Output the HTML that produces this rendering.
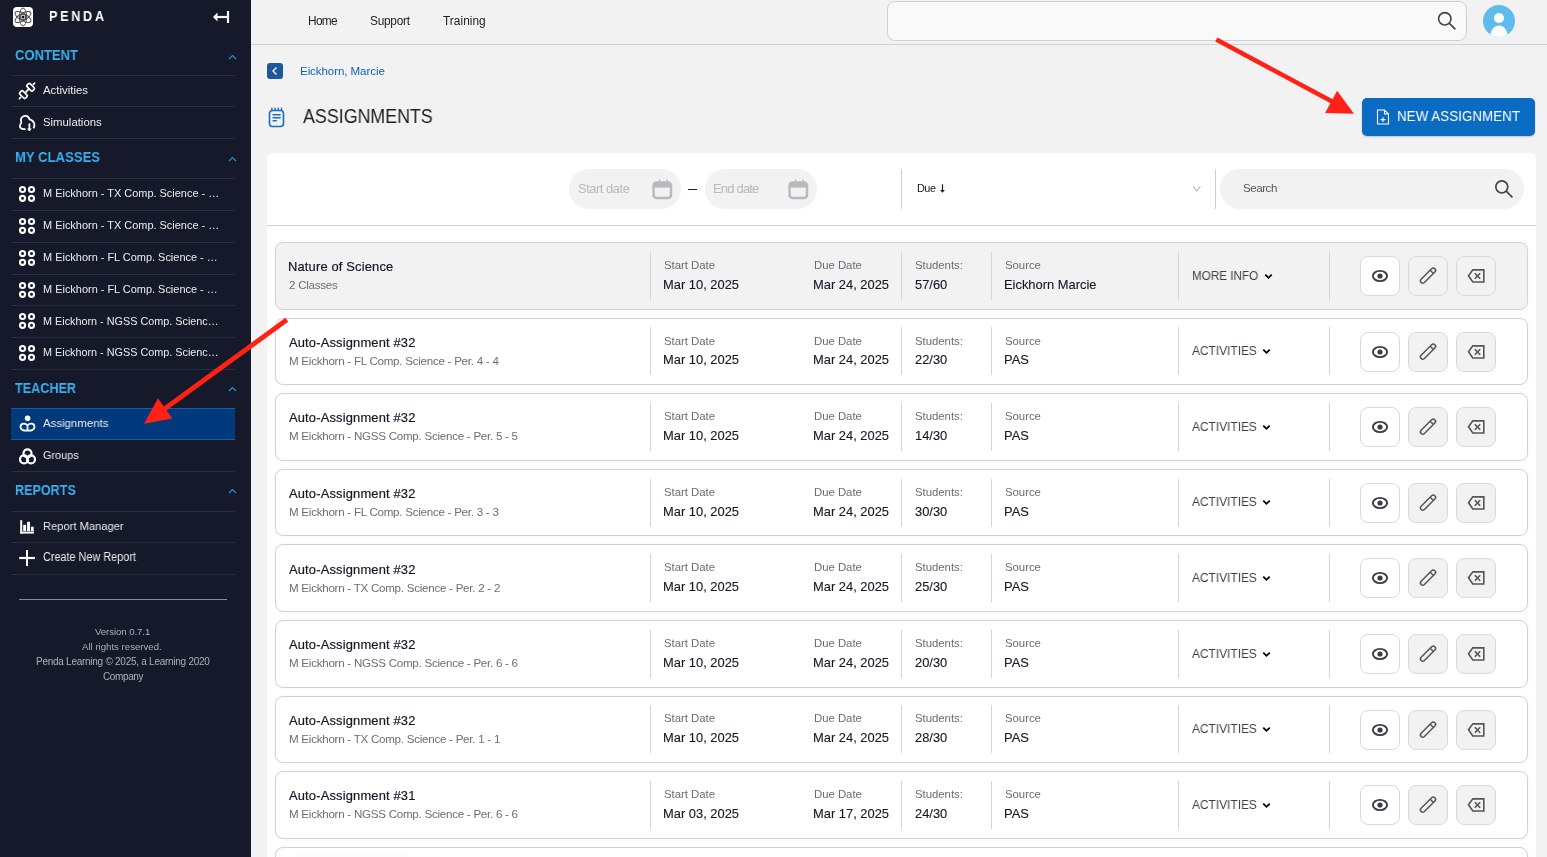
<!DOCTYPE html><html><head><meta charset="utf-8"><style>
*{box-sizing:border-box;margin:0;padding:0}
html,body{width:1547px;height:857px;overflow:hidden;background:#f2f2f2;font-family:"Liberation Sans", sans-serif;position:relative}
.abs{position:absolute}
.t{position:absolute;white-space:nowrap;line-height:1;will-change:transform}
#sb{position:absolute;left:0;top:0;width:251px;height:857px;background:#151929}
.sep{position:absolute;left:11px;width:224px;height:1px;background:#2b2f3e}
.ico{position:absolute;left:18px;width:17px;height:17px}
.chev{position:absolute;left:228px;width:9px;height:6px}
.row{position:absolute;left:275px;width:1253px;height:67.6px;box-shadow:0 0 4px rgba(0,0,0,0.035);border:1px solid #d2d2d2;border-radius:8px;background:#fff}
.vs{position:absolute;width:1px;height:48px;background:#d4d4d4}
.btn{position:absolute;width:40px;height:40px;border:1px solid #d9d9d9;border-radius:8px;background:#f2f2f2}
.btn svg{position:absolute;left:8px;top:8px}
</style></head><body>
<div id="sb"><svg class="abs" style="left:13px;top:7px" width="20" height="20" viewBox="0 0 20 20">
<rect x="0" y="0" width="20" height="20" rx="4" fill="#fff"/>
<g fill="none" stroke="#4a4a4a" stroke-width="1">
<ellipse cx="10" cy="10" rx="3.6" ry="9" />
<ellipse cx="10" cy="10" rx="3.6" ry="9" transform="rotate(60 10 10)"/>
<ellipse cx="10" cy="10" rx="3.6" ry="9" transform="rotate(-60 10 10)"/>
<circle cx="10" cy="10" r="2.9" stroke-width="1.3"/>
</g><circle cx="10" cy="10" r="1.5" fill="#111"/></svg><div class="t" style="left:49.16px;top:8px;font-size:15px;font-weight:700;color:#fff;letter-spacing:3.242px;transform:scaleX(0.8400);transform-origin:0 0;">PENDA</div><svg class="abs" style="left:212px;top:10px" width="18" height="14" viewBox="0 0 18 14">
<path d="M16 1 V13" stroke="#f4f8fc" stroke-width="2.2"/><path d="M15 7 H3" stroke="#f4f8fc" stroke-width="2.2"/>
<path d="M1 7 L5.5 2.5 V11.5 Z" fill="#f4f8fc"/></svg><div class="t" style="left:15.40px;top:48px;font-size:14.5px;font-weight:700;color:#38aff0;letter-spacing:0.000px;transform:scaleX(0.8972);transform-origin:0 0;">CONTENT</div><svg class="chev" style="top:53.5px" viewBox="0 0 9 6" width="9" height="6"><path d="M1 5 L4.5 1.5 L8 5" fill="none" stroke="#2e8fce" stroke-width="1.1"/></svg><div class="sep" style="top:75px"></div><div class="sep" style="top:106px"></div><div class="sep" style="top:138px"></div><svg class="abs" style="left:14px;top:77px" width="28" height="28" viewBox="0 0 28 28"><g fill="none" stroke="#fff" stroke-width="1.7" stroke-linejoin="round" stroke-linecap="round">
<rect x="12.6" y="8" width="8" height="4.4" rx="1.4" transform="rotate(45 16.6 10.2)"/>
<rect x="5.4" y="15.4" width="8" height="4.4" rx="1.4" transform="rotate(45 9.4 17.6)"/>
<path d="M14.6 12.2 L11.4 15.6"/><path d="M19.4 7.4 L20.6 6.2"/><path d="M6.6 20.4 L5.4 21.6"/>
</g></svg><div class="t" style="left:43.30px;top:85px;font-size:11.0px;font-weight:400;color:#ececec;letter-spacing:0.000px;transform:scaleX(1.0388);transform-origin:0 0;">Activities</div><svg class="abs" style="left:14px;top:108px" width="28" height="28" viewBox="0 0 28 28"><g fill="none" stroke="#fff" stroke-width="1.8" stroke-linecap="round" stroke-linejoin="round">
<path d="M10.8 21.2 C8.4 21.2 6.4 20.8 5.9 18.8 C5.5 17.2 6.6 16 7.2 14.8 C7.5 14 6.8 13 6.9 11.8 C7.1 9.6 9.2 7.9 11.6 7.9 C13.4 7.9 14.7 9 15.6 11.4 C18 12.2 20.4 14.2 20.4 17.2 C20.4 18.4 20.1 19.1 19.7 19.6"/>
<path d="M15.4 16.2 V22"/></g><path d="M12.9 20.4 L15.4 22.9 L17.9 20.4 Z" fill="#fff"/></svg><div class="t" style="left:43.30px;top:117px;font-size:10.86px;font-weight:400;color:#ececec;letter-spacing:0.000px;transform:scaleX(1.0458);transform-origin:0 0;">Simulations</div><div class="t" style="left:15.40px;top:150px;font-size:14.5px;font-weight:700;color:#38aff0;letter-spacing:0.000px;transform:scaleX(0.9049);transform-origin:0 0;">MY CLASSES</div><svg class="chev" style="top:156px" viewBox="0 0 9 6" width="9" height="6"><path d="M1 5 L4.5 1.5 L8 5" fill="none" stroke="#2e8fce" stroke-width="1.1"/></svg><div class="sep" style="top:178px"></div><div class="sep" style="top:210px"></div><div class="sep" style="top:242px"></div><div class="sep" style="top:274px"></div><div class="sep" style="top:305px"></div><div class="sep" style="top:337px"></div><div class="sep" style="top:369px"></div><svg class="abs" style="left:14px;top:180.00px" width="28" height="28" viewBox="0 0 28 28"><g fill="none" stroke="#fff" stroke-width="2.1">
<circle cx="8.56" cy="9.5" r="2.55"/><circle cx="17.5" cy="9.5" r="2.55"/><circle cx="8.56" cy="18.3" r="2.55"/><circle cx="17.5" cy="18.3" r="2.55"/></g></svg><div class="t" style="left:43.20px;top:188px;font-size:10.57px;font-weight:400;color:#ececec;letter-spacing:0.000px;transform:scaleX(1.0362);transform-origin:0 0;">M Eickhorn - TX Comp. Science - …</div><svg class="abs" style="left:14px;top:211.85px" width="28" height="28" viewBox="0 0 28 28"><g fill="none" stroke="#fff" stroke-width="2.1">
<circle cx="8.56" cy="9.5" r="2.55"/><circle cx="17.5" cy="9.5" r="2.55"/><circle cx="8.56" cy="18.3" r="2.55"/><circle cx="17.5" cy="18.3" r="2.55"/></g></svg><div class="t" style="left:43.20px;top:220px;font-size:10.57px;font-weight:400;color:#ececec;letter-spacing:0.000px;transform:scaleX(1.0362);transform-origin:0 0;">M Eickhorn - TX Comp. Science - …</div><svg class="abs" style="left:14px;top:243.70px" width="28" height="28" viewBox="0 0 28 28"><g fill="none" stroke="#fff" stroke-width="2.1">
<circle cx="8.56" cy="9.5" r="2.55"/><circle cx="17.5" cy="9.5" r="2.55"/><circle cx="8.56" cy="18.3" r="2.55"/><circle cx="17.5" cy="18.3" r="2.55"/></g></svg><div class="t" style="left:43.20px;top:252px;font-size:10.57px;font-weight:400;color:#ececec;letter-spacing:0.000px;transform:scaleX(1.0357);transform-origin:0 0;">M Eickhorn - FL Comp. Science - …</div><svg class="abs" style="left:14px;top:275.55px" width="28" height="28" viewBox="0 0 28 28"><g fill="none" stroke="#fff" stroke-width="2.1">
<circle cx="8.56" cy="9.5" r="2.55"/><circle cx="17.5" cy="9.5" r="2.55"/><circle cx="8.56" cy="18.3" r="2.55"/><circle cx="17.5" cy="18.3" r="2.55"/></g></svg><div class="t" style="left:43.20px;top:284px;font-size:10.57px;font-weight:400;color:#ececec;letter-spacing:0.000px;transform:scaleX(1.0357);transform-origin:0 0;">M Eickhorn - FL Comp. Science - …</div><svg class="abs" style="left:14px;top:307.40px" width="28" height="28" viewBox="0 0 28 28"><g fill="none" stroke="#fff" stroke-width="2.1">
<circle cx="8.56" cy="9.5" r="2.55"/><circle cx="17.5" cy="9.5" r="2.55"/><circle cx="8.56" cy="18.3" r="2.55"/><circle cx="17.5" cy="18.3" r="2.55"/></g></svg><div class="t" style="left:43.20px;top:316px;font-size:10.57px;font-weight:400;color:#ececec;letter-spacing:0.000px;transform:scaleX(1.0244);transform-origin:0 0;">M Eickhorn - NGSS Comp. Scienc…</div><svg class="abs" style="left:14px;top:339.25px" width="28" height="28" viewBox="0 0 28 28"><g fill="none" stroke="#fff" stroke-width="2.1">
<circle cx="8.56" cy="9.5" r="2.55"/><circle cx="17.5" cy="9.5" r="2.55"/><circle cx="8.56" cy="18.3" r="2.55"/><circle cx="17.5" cy="18.3" r="2.55"/></g></svg><div class="t" style="left:43.20px;top:347px;font-size:10.57px;font-weight:400;color:#ececec;letter-spacing:0.000px;transform:scaleX(1.0244);transform-origin:0 0;">M Eickhorn - NGSS Comp. Scienc…</div><div class="t" style="left:15.04px;top:381px;font-size:14.5px;font-weight:700;color:#38aff0;letter-spacing:0.000px;transform:scaleX(0.8718);transform-origin:0 0;">TEACHER</div><svg class="chev" style="top:386px" viewBox="0 0 9 6" width="9" height="6"><path d="M1 5 L4.5 1.5 L8 5" fill="none" stroke="#2e8fce" stroke-width="1.1"/></svg><div class="abs" style="left:11px;top:408px;width:224px;height:32px;background:#013a7c;border-top:1px solid #1d5a9e;border-bottom:1px solid #1d5a9e"></div><svg class="ico" style="top:415px;left:18.5px" viewBox="0 0 17 17"><circle cx="8.6" cy="3.3" r="2.8" fill="#fff"/>
<g fill="none" stroke="#fff" stroke-width="1.8"><path d="M8.5 15.6 C5 15.8 1.5 15.2 1.5 12 C1.5 9.6 3.2 8.6 4.9 8.6 C6.7 8.6 8.5 9.8 8.5 11.6 C8.5 9.8 10.4 8.6 12.1 8.6 C13.8 8.6 15.5 9.6 15.5 12 C15.5 15.2 12 15.8 8.5 15.6 Z"/><path d="M8.5 11.6 V15.6"/></g></svg><div class="t" style="left:43.10px;top:417px;font-size:11.71px;font-weight:400;color:#ececec;letter-spacing:0.000px;transform:scaleX(0.9755);transform-origin:0 0;">Assignments</div><div class="sep" style="top:471px"></div><svg class="ico" style="top:448px;left:18.5px" viewBox="0 0 17 17"><g fill="none" stroke="#fff" stroke-width="2.2">
<circle cx="8.5" cy="5.4" r="4"/><circle cx="5" cy="11.4" r="4"/><circle cx="12" cy="11.4" r="4"/></g></svg><div class="t" style="left:43.10px;top:450px;font-size:11.57px;font-weight:400;color:#ececec;letter-spacing:0.000px;transform:scaleX(0.9414);transform-origin:0 0;">Groups</div><div class="t" style="left:15.40px;top:483px;font-size:14.5px;font-weight:700;color:#38aff0;letter-spacing:0.000px;transform:scaleX(0.8676);transform-origin:0 0;">REPORTS</div><svg class="chev" style="top:488px" viewBox="0 0 9 6" width="9" height="6"><path d="M1 5 L4.5 1.5 L8 5" fill="none" stroke="#2e8fce" stroke-width="1.1"/></svg><div class="sep" style="top:511px"></div><div class="sep" style="top:542px"></div><div class="sep" style="top:574px"></div><svg class="ico" style="top:518px" viewBox="0 0 17 17"><g fill="#fff">
<rect x="2.2" y="2.2" width="2" height="13.4"/><rect x="2.2" y="13.6" width="13.7" height="2"/>
<rect x="5.2" y="6.8" width="2.9" height="6.4"/><rect x="9.1" y="3.8" width="2.9" height="9.4"/><rect x="12.9" y="8.7" width="2.8" height="4.5"/>
</g></svg><div class="t" style="left:43.10px;top:520px;font-size:11.71px;font-weight:400;color:#ececec;letter-spacing:0.000px;transform:scaleX(0.9519);transform-origin:0 0;">Report Manager</div><svg class="ico" style="top:549px" viewBox="0 0 17 17"><g fill="#fff">
<rect x="8" y="1" width="2" height="16.3"/><rect x="1.2" y="7.9" width="15.7" height="2.2"/></g></svg><div class="t" style="left:43.10px;top:551px;font-size:12.0px;font-weight:400;color:#ececec;letter-spacing:0.000px;transform:scaleX(0.9045);transform-origin:0 0;">Create New Report</div><div class="abs" style="left:19px;top:599px;width:208px;height:1px;background:#8a8d96"></div><div class="t" style="left:94.80px;top:627px;font-size:9.57px;font-weight:400;color:#aeb0b8;letter-spacing:-0.050px;">Version 0.7.1</div><div class="t" style="left:82.20px;top:642px;font-size:9.57px;font-weight:400;color:#aeb0b8;letter-spacing:0.025px;">All rights reserved.</div><div class="t" style="left:35.90px;top:657px;font-size:10.0px;font-weight:400;color:#aeb0b8;letter-spacing:-0.264px;">Penda Learning © 2025, a Learning 2020</div><div class="t" style="left:102.70px;top:672px;font-size:10.0px;font-weight:400;color:#aeb0b8;letter-spacing:-0.383px;">Company</div></div><div class="abs" style="left:251px;top:0;width:1296px;height:45px;border-bottom:1px solid #cfcfcf;background:#f2f2f2"></div><div class="t" style="left:307.50px;top:16px;font-size:11.86px;font-weight:400;color:#222;letter-spacing:-0.680px;">Home</div><div class="t" style="left:370.20px;top:16px;font-size:11.86px;font-weight:400;color:#222;letter-spacing:-0.257px;">Support</div><div class="t" style="left:443.20px;top:16px;font-size:11.86px;font-weight:400;color:#222;letter-spacing:0.041px;">Training</div><div class="abs" style="left:887px;top:1px;width:580px;height:40px;border:1px solid #d0d0d0;border-radius:8px;background:#f9f9f9"></div><svg class="abs" style="left:1437px;top:11px" width="20" height="20" viewBox="0 0 20 20"><g fill="none" stroke="#444" stroke-width="1.6">
<circle cx="7.8" cy="7.8" r="6.2"/><path d="M12.4 12.4 L18.4 18.4"/></g></svg><svg class="abs" style="left:1483px;top:4.5px" width="32" height="32" viewBox="0 0 32 32">
<defs><clipPath id="av"><circle cx="16" cy="16" r="16"/></clipPath></defs>
<circle cx="16" cy="16" r="16" fill="#5fbbed"/><g clip-path="url(#av)" fill="#fff"><circle cx="16" cy="13" r="5"/><ellipse cx="16" cy="32" rx="9" ry="11.5"/></g></svg><svg class="abs" style="left:267px;top:63px" width="16" height="16" viewBox="0 0 16 16"><rect width="16" height="16" rx="3" fill="#1d579c"/>
<path d="M9.5 4.5 L6 8 L9.5 11.5" fill="none" stroke="#fff" stroke-width="1.3"/></svg><div class="t" style="left:299.80px;top:66px;font-size:11.57px;font-weight:400;color:#0d62b8;letter-spacing:-0.085px;">Eickhorn, Marcie</div><svg class="abs" style="left:268px;top:107px" width="17" height="21" viewBox="0 0 17 21"><g fill="none" stroke="#1a6fc1" stroke-width="1.6">
<rect x="1.5" y="3.5" width="14" height="16" rx="3"/></g><g fill="#1a6fc1"><rect x="3.2" y="0.6" width="1.4" height="3"/><rect x="6.4" y="0.6" width="1.4" height="3"/><rect x="9.6" y="0.6" width="1.4" height="3"/><rect x="12.8" y="0.6" width="1.4" height="3"/>
<rect x="4.4" y="7" width="8.4" height="1.5" rx="0.7"/><rect x="4.4" y="10" width="8.4" height="1.5" rx="0.7"/><rect x="4.4" y="13" width="4.6" height="1.5" rx="0.7"/></g></svg><div class="t" style="left:302.90px;top:107px;font-size:19.6px;font-weight:400;color:#222;letter-spacing:0.000px;transform:scaleX(0.9099);transform-origin:0 0;">ASSIGNMENTS</div><div class="abs" style="left:1362px;top:98px;width:173px;height:38px;border-radius:5px;background:#0a6bc3;box-shadow:0 1px 2px rgba(0,0,0,0.2)"></div><svg class="abs" style="left:1376px;top:109px" width="14" height="16" viewBox="0 0 14 16"><g fill="none" stroke="#fff" stroke-width="1.1">
<path d="M1.5 1 H8.5 L12.5 5 V15 H1.5 Z"/><path d="M8.5 1 V5 H12.5"/><path d="M7 8.2 V13 M4.6 10.6 H9.4"/></g></svg><div class="t" style="left:1396.59px;top:109px;font-size:14.7px;font-weight:400;color:#fff;letter-spacing:0.000px;transform:scaleX(0.9138);transform-origin:0 0;">NEW ASSIGNMENT</div><div class="abs" style="left:267px;top:153px;width:1269px;height:720px;background:#fff;border-radius:6px"></div><div class="abs" style="left:267px;top:225px;width:1269px;height:1px;background:#d4d4d4"></div><div class="abs" style="left:569px;top:169px;width:112px;height:40px;border-radius:20px;background:#f2f2f2"></div><div class="t" style="left:578.40px;top:182px;font-size:13.0px;font-weight:400;color:#b8b8b8;letter-spacing:-0.493px;">Start date</div><svg class="abs" style="left:651.5px;top:178.5px" width="21" height="21" viewBox="0 0 21 21"><g fill="none" stroke="#b9babe" stroke-width="2.5"><rect x="1.6" y="3.6" width="17.4" height="15.4" rx="3"/></g>
<rect x="1.6" y="3.6" width="17.4" height="5" fill="#b9babe"/><rect x="6.8" y="0.6" width="1.6" height="3.5" rx="0.8" fill="#b9babe"/><rect x="14.2" y="0.6" width="1.6" height="3.5" rx="0.8" fill="#b9babe"/></svg><div class="abs" style="left:688px;top:188.5px;width:9px;height:1.3px;background:#222"></div><div class="abs" style="left:705px;top:169px;width:112px;height:40px;border-radius:20px;background:#f2f2f2"></div><div class="t" style="left:713.40px;top:182px;font-size:13.0px;font-weight:400;color:#b8b8b8;letter-spacing:-0.816px;">End date</div><svg class="abs" style="left:787.5px;top:178.5px" width="21" height="21" viewBox="0 0 21 21"><g fill="none" stroke="#b9babe" stroke-width="2.5"><rect x="1.6" y="3.6" width="17.4" height="15.4" rx="3"/></g>
<rect x="1.6" y="3.6" width="17.4" height="5" fill="#b9babe"/><rect x="6.8" y="0.6" width="1.6" height="3.5" rx="0.8" fill="#b9babe"/><rect x="14.2" y="0.6" width="1.6" height="3.5" rx="0.8" fill="#b9babe"/></svg><div class="abs" style="left:901px;top:169px;width:1px;height:40px;background:#cfcfcf"></div><div class="t" style="left:917.00px;top:183px;font-size:10.86px;font-weight:400;color:#151826;letter-spacing:-0.491px;">Due</div><svg class="abs" style="left:939px;top:183px" width="8" height="11" viewBox="0 0 8 11"><path d="M3.5 1.3 V7.6" stroke="#151826" stroke-width="1.2"/><path d="M1.1 6.9 L5.9 6.9 L3.5 9.7 Z" fill="#151826"/></svg><svg class="abs" style="left:1192px;top:186px" width="10" height="6" viewBox="0 0 10 6"><path d="M1.3 0.4 L4.5 5.1 L8.4 0.4" fill="none" stroke="#bdbdbd" stroke-width="1.1"/></svg><div class="abs" style="left:1215px;top:169px;width:1px;height:40px;background:#cfcfcf"></div><div class="abs" style="left:1220px;top:169px;width:304px;height:40px;border-radius:20px;background:#f2f2f2"></div><div class="t" style="left:1242.80px;top:183px;font-size:11.57px;font-weight:400;color:#55565e;letter-spacing:-0.461px;">Search</div><svg class="abs" style="left:1494px;top:179px" width="20" height="20" viewBox="0 0 20 20"><g fill="none" stroke="#444" stroke-width="1.7">
<circle cx="7.8" cy="7.8" r="6"/><path d="M12.2 12.2 L18.4 18.4"/></g></svg><div class="row" style="top:242.00px;background:#f2f2f2"></div><div class="t" style="left:288.10px;top:261px;font-size:12.9px;font-weight:400;color:#151826;letter-spacing:0.173px;-webkit-text-stroke:0.2px #151826;">Nature of Science</div><div class="t" style="left:289.10px;top:279px;font-size:11.6px;font-weight:400;color:#6c6d75;letter-spacing:-0.262px;">2 Classes</div><div class="vs" style="left:650.0px;top:251.70px"></div><div class="vs" style="left:901.0px;top:251.70px"></div><div class="vs" style="left:991.0px;top:251.70px"></div><div class="vs" style="left:1177.8px;top:251.70px"></div><div class="vs" style="left:1329.0px;top:251.70px"></div><div class="t" style="left:664.30px;top:260px;font-size:11.4px;font-weight:400;color:#6b6c74;letter-spacing:-0.033px;">Start Date</div><div class="t" style="left:663.30px;top:279px;font-size:12.9px;font-weight:400;color:#151826;letter-spacing:0.004px;-webkit-text-stroke:0.12px #151826;">Mar 10, 2025</div><div class="t" style="left:814.30px;top:260px;font-size:11.4px;font-weight:400;color:#6b6c74;letter-spacing:-0.033px;">Due Date</div><div class="t" style="left:813.30px;top:279px;font-size:12.9px;font-weight:400;color:#151826;letter-spacing:0.004px;-webkit-text-stroke:0.12px #151826;">Mar 24, 2025</div><div class="t" style="left:914.60px;top:260px;font-size:11.4px;font-weight:400;color:#6b6c74;letter-spacing:-0.033px;">Students:</div><div class="t" style="left:914.60px;top:279px;font-size:12.9px;font-weight:400;color:#151826;letter-spacing:0.004px;-webkit-text-stroke:0.12px #151826;">57/60</div><div class="t" style="left:1004.60px;top:260px;font-size:11.4px;font-weight:400;color:#6b6c74;letter-spacing:-0.033px;">Source</div><div class="t" style="left:1003.60px;top:279px;font-size:12.9px;font-weight:400;color:#151826;letter-spacing:0.004px;-webkit-text-stroke:0.12px #151826;">Eickhorn Marcie</div><div class="t" style="left:1191.88px;top:270px;font-size:12.7px;font-weight:400;color:#3d3f47;letter-spacing:0.000px;transform:scaleX(0.9208);transform-origin:0 0;">MORE INFO</div><svg class="abs" style="left:1264px;top:272.60px" width="9" height="7" viewBox="0 0 9 7"><path d="M1.3 1.6 L4.5 4.8 L7.7 1.6" fill="none" stroke="#000" stroke-width="1.8"/></svg><div class="btn" style="left:1360px;top:255.90px;background:#fff"><svg width="22" height="22" viewBox="0 0 22 22"><ellipse cx="11" cy="11" rx="7.1" ry="5.1" fill="none" stroke="#3a3d45" stroke-width="1.9"/><circle cx="11" cy="11" r="2.6" fill="#3a3d45"/></svg></div><div class="btn" style="left:1408px;top:255.90px;background:#f2f2f2"><svg width="22" height="22" viewBox="0 0 22 22"><g transform="rotate(-45 11 10.7)" fill="none" stroke="#555" stroke-width="1.5"><rect x="1.3" y="8.4" width="19.4" height="4.6" rx="2.3"/><path d="M16.4 8.4 V13"/></g></svg></div><div class="btn" style="left:1456px;top:255.90px;background:#f2f2f2"><svg width="22" height="22" viewBox="0 0 22 22"><g fill="none" stroke="#555" stroke-width="1.6"><path d="M7.8 4.9 H18.8 V17 H7.8 L3.5 10.8 Z"/><path d="M9.8 8.3 L15.2 13.8 M15.2 8.3 L9.8 13.8"/></g></svg></div><div class="row" style="top:317.60px;background:#fff"></div><div class="t" style="left:289.10px;top:337px;font-size:12.9px;font-weight:400;color:#151826;letter-spacing:0.173px;-webkit-text-stroke:0.2px #151826;">Auto-Assignment #32</div><div class="t" style="left:289.10px;top:355px;font-size:11.6px;font-weight:400;color:#6c6d75;letter-spacing:-0.262px;">M Eickhorn - FL Comp. Science - Per. 4 - 4</div><div class="vs" style="left:650.0px;top:327.30px"></div><div class="vs" style="left:901.0px;top:327.30px"></div><div class="vs" style="left:991.0px;top:327.30px"></div><div class="vs" style="left:1177.8px;top:327.30px"></div><div class="vs" style="left:1329.0px;top:327.30px"></div><div class="t" style="left:664.30px;top:336px;font-size:11.4px;font-weight:400;color:#6b6c74;letter-spacing:-0.033px;">Start Date</div><div class="t" style="left:663.30px;top:354px;font-size:12.9px;font-weight:400;color:#151826;letter-spacing:0.004px;-webkit-text-stroke:0.12px #151826;">Mar 10, 2025</div><div class="t" style="left:814.30px;top:336px;font-size:11.4px;font-weight:400;color:#6b6c74;letter-spacing:-0.033px;">Due Date</div><div class="t" style="left:813.30px;top:354px;font-size:12.9px;font-weight:400;color:#151826;letter-spacing:0.004px;-webkit-text-stroke:0.12px #151826;">Mar 24, 2025</div><div class="t" style="left:914.60px;top:336px;font-size:11.4px;font-weight:400;color:#6b6c74;letter-spacing:-0.033px;">Students:</div><div class="t" style="left:914.60px;top:354px;font-size:12.9px;font-weight:400;color:#151826;letter-spacing:0.004px;-webkit-text-stroke:0.12px #151826;">22/30</div><div class="t" style="left:1004.60px;top:336px;font-size:11.4px;font-weight:400;color:#6b6c74;letter-spacing:-0.033px;">Source</div><div class="t" style="left:1003.60px;top:354px;font-size:12.9px;font-weight:400;color:#151826;letter-spacing:0.004px;-webkit-text-stroke:0.12px #151826;">PAS</div><div class="t" style="left:1192.00px;top:345px;font-size:12.7px;font-weight:400;color:#3d3f47;letter-spacing:0.000px;transform:scaleX(0.9384);transform-origin:0 0;">ACTIVITIES</div><svg class="abs" style="left:1262px;top:348.20px" width="9" height="7" viewBox="0 0 9 7"><path d="M1.3 1.6 L4.5 4.8 L7.7 1.6" fill="none" stroke="#000" stroke-width="1.8"/></svg><div class="btn" style="left:1360px;top:331.50px;background:#fff"><svg width="22" height="22" viewBox="0 0 22 22"><ellipse cx="11" cy="11" rx="7.1" ry="5.1" fill="none" stroke="#3a3d45" stroke-width="1.9"/><circle cx="11" cy="11" r="2.6" fill="#3a3d45"/></svg></div><div class="btn" style="left:1408px;top:331.50px;background:#f2f2f2"><svg width="22" height="22" viewBox="0 0 22 22"><g transform="rotate(-45 11 10.7)" fill="none" stroke="#555" stroke-width="1.5"><rect x="1.3" y="8.4" width="19.4" height="4.6" rx="2.3"/><path d="M16.4 8.4 V13"/></g></svg></div><div class="btn" style="left:1456px;top:331.50px;background:#f2f2f2"><svg width="22" height="22" viewBox="0 0 22 22"><g fill="none" stroke="#555" stroke-width="1.6"><path d="M7.8 4.9 H18.8 V17 H7.8 L3.5 10.8 Z"/><path d="M9.8 8.3 L15.2 13.8 M15.2 8.3 L9.8 13.8"/></g></svg></div><div class="row" style="top:393.20px;background:#fff"></div><div class="t" style="left:289.10px;top:412px;font-size:12.9px;font-weight:400;color:#151826;letter-spacing:0.173px;-webkit-text-stroke:0.2px #151826;">Auto-Assignment #32</div><div class="t" style="left:289.10px;top:430px;font-size:11.6px;font-weight:400;color:#6c6d75;letter-spacing:-0.262px;">M Eickhorn - NGSS Comp. Science - Per. 5 - 5</div><div class="vs" style="left:650.0px;top:402.90px"></div><div class="vs" style="left:901.0px;top:402.90px"></div><div class="vs" style="left:991.0px;top:402.90px"></div><div class="vs" style="left:1177.8px;top:402.90px"></div><div class="vs" style="left:1329.0px;top:402.90px"></div><div class="t" style="left:664.30px;top:411px;font-size:11.4px;font-weight:400;color:#6b6c74;letter-spacing:-0.033px;">Start Date</div><div class="t" style="left:663.30px;top:430px;font-size:12.9px;font-weight:400;color:#151826;letter-spacing:0.004px;-webkit-text-stroke:0.12px #151826;">Mar 10, 2025</div><div class="t" style="left:814.30px;top:411px;font-size:11.4px;font-weight:400;color:#6b6c74;letter-spacing:-0.033px;">Due Date</div><div class="t" style="left:813.30px;top:430px;font-size:12.9px;font-weight:400;color:#151826;letter-spacing:0.004px;-webkit-text-stroke:0.12px #151826;">Mar 24, 2025</div><div class="t" style="left:914.60px;top:411px;font-size:11.4px;font-weight:400;color:#6b6c74;letter-spacing:-0.033px;">Students:</div><div class="t" style="left:914.60px;top:430px;font-size:12.9px;font-weight:400;color:#151826;letter-spacing:0.004px;-webkit-text-stroke:0.12px #151826;">14/30</div><div class="t" style="left:1004.60px;top:411px;font-size:11.4px;font-weight:400;color:#6b6c74;letter-spacing:-0.033px;">Source</div><div class="t" style="left:1003.60px;top:430px;font-size:12.9px;font-weight:400;color:#151826;letter-spacing:0.004px;-webkit-text-stroke:0.12px #151826;">PAS</div><div class="t" style="left:1192.00px;top:421px;font-size:12.7px;font-weight:400;color:#3d3f47;letter-spacing:0.000px;transform:scaleX(0.9384);transform-origin:0 0;">ACTIVITIES</div><svg class="abs" style="left:1262px;top:423.80px" width="9" height="7" viewBox="0 0 9 7"><path d="M1.3 1.6 L4.5 4.8 L7.7 1.6" fill="none" stroke="#000" stroke-width="1.8"/></svg><div class="btn" style="left:1360px;top:407.10px;background:#fff"><svg width="22" height="22" viewBox="0 0 22 22"><ellipse cx="11" cy="11" rx="7.1" ry="5.1" fill="none" stroke="#3a3d45" stroke-width="1.9"/><circle cx="11" cy="11" r="2.6" fill="#3a3d45"/></svg></div><div class="btn" style="left:1408px;top:407.10px;background:#f2f2f2"><svg width="22" height="22" viewBox="0 0 22 22"><g transform="rotate(-45 11 10.7)" fill="none" stroke="#555" stroke-width="1.5"><rect x="1.3" y="8.4" width="19.4" height="4.6" rx="2.3"/><path d="M16.4 8.4 V13"/></g></svg></div><div class="btn" style="left:1456px;top:407.10px;background:#f2f2f2"><svg width="22" height="22" viewBox="0 0 22 22"><g fill="none" stroke="#555" stroke-width="1.6"><path d="M7.8 4.9 H18.8 V17 H7.8 L3.5 10.8 Z"/><path d="M9.8 8.3 L15.2 13.8 M15.2 8.3 L9.8 13.8"/></g></svg></div><div class="row" style="top:468.80px;background:#fff"></div><div class="t" style="left:289.10px;top:488px;font-size:12.9px;font-weight:400;color:#151826;letter-spacing:0.173px;-webkit-text-stroke:0.2px #151826;">Auto-Assignment #32</div><div class="t" style="left:289.10px;top:506px;font-size:11.6px;font-weight:400;color:#6c6d75;letter-spacing:-0.262px;">M Eickhorn - FL Comp. Science - Per. 3 - 3</div><div class="vs" style="left:650.0px;top:478.50px"></div><div class="vs" style="left:901.0px;top:478.50px"></div><div class="vs" style="left:991.0px;top:478.50px"></div><div class="vs" style="left:1177.8px;top:478.50px"></div><div class="vs" style="left:1329.0px;top:478.50px"></div><div class="t" style="left:664.30px;top:487px;font-size:11.4px;font-weight:400;color:#6b6c74;letter-spacing:-0.033px;">Start Date</div><div class="t" style="left:663.30px;top:506px;font-size:12.9px;font-weight:400;color:#151826;letter-spacing:0.004px;-webkit-text-stroke:0.12px #151826;">Mar 10, 2025</div><div class="t" style="left:814.30px;top:487px;font-size:11.4px;font-weight:400;color:#6b6c74;letter-spacing:-0.033px;">Due Date</div><div class="t" style="left:813.30px;top:506px;font-size:12.9px;font-weight:400;color:#151826;letter-spacing:0.004px;-webkit-text-stroke:0.12px #151826;">Mar 24, 2025</div><div class="t" style="left:914.60px;top:487px;font-size:11.4px;font-weight:400;color:#6b6c74;letter-spacing:-0.033px;">Students:</div><div class="t" style="left:914.60px;top:506px;font-size:12.9px;font-weight:400;color:#151826;letter-spacing:0.004px;-webkit-text-stroke:0.12px #151826;">30/30</div><div class="t" style="left:1004.60px;top:487px;font-size:11.4px;font-weight:400;color:#6b6c74;letter-spacing:-0.033px;">Source</div><div class="t" style="left:1003.60px;top:506px;font-size:12.9px;font-weight:400;color:#151826;letter-spacing:0.004px;-webkit-text-stroke:0.12px #151826;">PAS</div><div class="t" style="left:1192.00px;top:496px;font-size:12.7px;font-weight:400;color:#3d3f47;letter-spacing:0.000px;transform:scaleX(0.9384);transform-origin:0 0;">ACTIVITIES</div><svg class="abs" style="left:1262px;top:499.40px" width="9" height="7" viewBox="0 0 9 7"><path d="M1.3 1.6 L4.5 4.8 L7.7 1.6" fill="none" stroke="#000" stroke-width="1.8"/></svg><div class="btn" style="left:1360px;top:482.70px;background:#fff"><svg width="22" height="22" viewBox="0 0 22 22"><ellipse cx="11" cy="11" rx="7.1" ry="5.1" fill="none" stroke="#3a3d45" stroke-width="1.9"/><circle cx="11" cy="11" r="2.6" fill="#3a3d45"/></svg></div><div class="btn" style="left:1408px;top:482.70px;background:#f2f2f2"><svg width="22" height="22" viewBox="0 0 22 22"><g transform="rotate(-45 11 10.7)" fill="none" stroke="#555" stroke-width="1.5"><rect x="1.3" y="8.4" width="19.4" height="4.6" rx="2.3"/><path d="M16.4 8.4 V13"/></g></svg></div><div class="btn" style="left:1456px;top:482.70px;background:#f2f2f2"><svg width="22" height="22" viewBox="0 0 22 22"><g fill="none" stroke="#555" stroke-width="1.6"><path d="M7.8 4.9 H18.8 V17 H7.8 L3.5 10.8 Z"/><path d="M9.8 8.3 L15.2 13.8 M15.2 8.3 L9.8 13.8"/></g></svg></div><div class="row" style="top:544.40px;background:#fff"></div><div class="t" style="left:289.10px;top:564px;font-size:12.9px;font-weight:400;color:#151826;letter-spacing:0.173px;-webkit-text-stroke:0.2px #151826;">Auto-Assignment #32</div><div class="t" style="left:289.10px;top:582px;font-size:11.6px;font-weight:400;color:#6c6d75;letter-spacing:-0.262px;">M Eickhorn - TX Comp. Science - Per. 2 - 2</div><div class="vs" style="left:650.0px;top:554.10px"></div><div class="vs" style="left:901.0px;top:554.10px"></div><div class="vs" style="left:991.0px;top:554.10px"></div><div class="vs" style="left:1177.8px;top:554.10px"></div><div class="vs" style="left:1329.0px;top:554.10px"></div><div class="t" style="left:664.30px;top:562px;font-size:11.4px;font-weight:400;color:#6b6c74;letter-spacing:-0.033px;">Start Date</div><div class="t" style="left:663.30px;top:581px;font-size:12.9px;font-weight:400;color:#151826;letter-spacing:0.004px;-webkit-text-stroke:0.12px #151826;">Mar 10, 2025</div><div class="t" style="left:814.30px;top:562px;font-size:11.4px;font-weight:400;color:#6b6c74;letter-spacing:-0.033px;">Due Date</div><div class="t" style="left:813.30px;top:581px;font-size:12.9px;font-weight:400;color:#151826;letter-spacing:0.004px;-webkit-text-stroke:0.12px #151826;">Mar 24, 2025</div><div class="t" style="left:914.60px;top:562px;font-size:11.4px;font-weight:400;color:#6b6c74;letter-spacing:-0.033px;">Students:</div><div class="t" style="left:914.60px;top:581px;font-size:12.9px;font-weight:400;color:#151826;letter-spacing:0.004px;-webkit-text-stroke:0.12px #151826;">25/30</div><div class="t" style="left:1004.60px;top:562px;font-size:11.4px;font-weight:400;color:#6b6c74;letter-spacing:-0.033px;">Source</div><div class="t" style="left:1003.60px;top:581px;font-size:12.9px;font-weight:400;color:#151826;letter-spacing:0.004px;-webkit-text-stroke:0.12px #151826;">PAS</div><div class="t" style="left:1192.00px;top:572px;font-size:12.7px;font-weight:400;color:#3d3f47;letter-spacing:0.000px;transform:scaleX(0.9384);transform-origin:0 0;">ACTIVITIES</div><svg class="abs" style="left:1262px;top:575.00px" width="9" height="7" viewBox="0 0 9 7"><path d="M1.3 1.6 L4.5 4.8 L7.7 1.6" fill="none" stroke="#000" stroke-width="1.8"/></svg><div class="btn" style="left:1360px;top:558.30px;background:#fff"><svg width="22" height="22" viewBox="0 0 22 22"><ellipse cx="11" cy="11" rx="7.1" ry="5.1" fill="none" stroke="#3a3d45" stroke-width="1.9"/><circle cx="11" cy="11" r="2.6" fill="#3a3d45"/></svg></div><div class="btn" style="left:1408px;top:558.30px;background:#f2f2f2"><svg width="22" height="22" viewBox="0 0 22 22"><g transform="rotate(-45 11 10.7)" fill="none" stroke="#555" stroke-width="1.5"><rect x="1.3" y="8.4" width="19.4" height="4.6" rx="2.3"/><path d="M16.4 8.4 V13"/></g></svg></div><div class="btn" style="left:1456px;top:558.30px;background:#f2f2f2"><svg width="22" height="22" viewBox="0 0 22 22"><g fill="none" stroke="#555" stroke-width="1.6"><path d="M7.8 4.9 H18.8 V17 H7.8 L3.5 10.8 Z"/><path d="M9.8 8.3 L15.2 13.8 M15.2 8.3 L9.8 13.8"/></g></svg></div><div class="row" style="top:620.00px;background:#fff"></div><div class="t" style="left:289.10px;top:639px;font-size:12.9px;font-weight:400;color:#151826;letter-spacing:0.173px;-webkit-text-stroke:0.2px #151826;">Auto-Assignment #32</div><div class="t" style="left:289.10px;top:657px;font-size:11.6px;font-weight:400;color:#6c6d75;letter-spacing:-0.262px;">M Eickhorn - NGSS Comp. Science - Per. 6 - 6</div><div class="vs" style="left:650.0px;top:629.70px"></div><div class="vs" style="left:901.0px;top:629.70px"></div><div class="vs" style="left:991.0px;top:629.70px"></div><div class="vs" style="left:1177.8px;top:629.70px"></div><div class="vs" style="left:1329.0px;top:629.70px"></div><div class="t" style="left:664.30px;top:638px;font-size:11.4px;font-weight:400;color:#6b6c74;letter-spacing:-0.033px;">Start Date</div><div class="t" style="left:663.30px;top:657px;font-size:12.9px;font-weight:400;color:#151826;letter-spacing:0.004px;-webkit-text-stroke:0.12px #151826;">Mar 10, 2025</div><div class="t" style="left:814.30px;top:638px;font-size:11.4px;font-weight:400;color:#6b6c74;letter-spacing:-0.033px;">Due Date</div><div class="t" style="left:813.30px;top:657px;font-size:12.9px;font-weight:400;color:#151826;letter-spacing:0.004px;-webkit-text-stroke:0.12px #151826;">Mar 24, 2025</div><div class="t" style="left:914.60px;top:638px;font-size:11.4px;font-weight:400;color:#6b6c74;letter-spacing:-0.033px;">Students:</div><div class="t" style="left:914.60px;top:657px;font-size:12.9px;font-weight:400;color:#151826;letter-spacing:0.004px;-webkit-text-stroke:0.12px #151826;">20/30</div><div class="t" style="left:1004.60px;top:638px;font-size:11.4px;font-weight:400;color:#6b6c74;letter-spacing:-0.033px;">Source</div><div class="t" style="left:1003.60px;top:657px;font-size:12.9px;font-weight:400;color:#151826;letter-spacing:0.004px;-webkit-text-stroke:0.12px #151826;">PAS</div><div class="t" style="left:1192.00px;top:648px;font-size:12.7px;font-weight:400;color:#3d3f47;letter-spacing:0.000px;transform:scaleX(0.9384);transform-origin:0 0;">ACTIVITIES</div><svg class="abs" style="left:1262px;top:650.60px" width="9" height="7" viewBox="0 0 9 7"><path d="M1.3 1.6 L4.5 4.8 L7.7 1.6" fill="none" stroke="#000" stroke-width="1.8"/></svg><div class="btn" style="left:1360px;top:633.90px;background:#fff"><svg width="22" height="22" viewBox="0 0 22 22"><ellipse cx="11" cy="11" rx="7.1" ry="5.1" fill="none" stroke="#3a3d45" stroke-width="1.9"/><circle cx="11" cy="11" r="2.6" fill="#3a3d45"/></svg></div><div class="btn" style="left:1408px;top:633.90px;background:#f2f2f2"><svg width="22" height="22" viewBox="0 0 22 22"><g transform="rotate(-45 11 10.7)" fill="none" stroke="#555" stroke-width="1.5"><rect x="1.3" y="8.4" width="19.4" height="4.6" rx="2.3"/><path d="M16.4 8.4 V13"/></g></svg></div><div class="btn" style="left:1456px;top:633.90px;background:#f2f2f2"><svg width="22" height="22" viewBox="0 0 22 22"><g fill="none" stroke="#555" stroke-width="1.6"><path d="M7.8 4.9 H18.8 V17 H7.8 L3.5 10.8 Z"/><path d="M9.8 8.3 L15.2 13.8 M15.2 8.3 L9.8 13.8"/></g></svg></div><div class="row" style="top:695.60px;background:#fff"></div><div class="t" style="left:289.10px;top:715px;font-size:12.9px;font-weight:400;color:#151826;letter-spacing:0.173px;-webkit-text-stroke:0.2px #151826;">Auto-Assignment #32</div><div class="t" style="left:289.10px;top:733px;font-size:11.6px;font-weight:400;color:#6c6d75;letter-spacing:-0.262px;">M Eickhorn - TX Comp. Science - Per. 1 - 1</div><div class="vs" style="left:650.0px;top:705.30px"></div><div class="vs" style="left:901.0px;top:705.30px"></div><div class="vs" style="left:991.0px;top:705.30px"></div><div class="vs" style="left:1177.8px;top:705.30px"></div><div class="vs" style="left:1329.0px;top:705.30px"></div><div class="t" style="left:664.30px;top:713px;font-size:11.4px;font-weight:400;color:#6b6c74;letter-spacing:-0.033px;">Start Date</div><div class="t" style="left:663.30px;top:732px;font-size:12.9px;font-weight:400;color:#151826;letter-spacing:0.004px;-webkit-text-stroke:0.12px #151826;">Mar 10, 2025</div><div class="t" style="left:814.30px;top:713px;font-size:11.4px;font-weight:400;color:#6b6c74;letter-spacing:-0.033px;">Due Date</div><div class="t" style="left:813.30px;top:732px;font-size:12.9px;font-weight:400;color:#151826;letter-spacing:0.004px;-webkit-text-stroke:0.12px #151826;">Mar 24, 2025</div><div class="t" style="left:914.60px;top:713px;font-size:11.4px;font-weight:400;color:#6b6c74;letter-spacing:-0.033px;">Students:</div><div class="t" style="left:914.60px;top:732px;font-size:12.9px;font-weight:400;color:#151826;letter-spacing:0.004px;-webkit-text-stroke:0.12px #151826;">28/30</div><div class="t" style="left:1004.60px;top:713px;font-size:11.4px;font-weight:400;color:#6b6c74;letter-spacing:-0.033px;">Source</div><div class="t" style="left:1003.60px;top:732px;font-size:12.9px;font-weight:400;color:#151826;letter-spacing:0.004px;-webkit-text-stroke:0.12px #151826;">PAS</div><div class="t" style="left:1192.00px;top:723px;font-size:12.7px;font-weight:400;color:#3d3f47;letter-spacing:0.000px;transform:scaleX(0.9384);transform-origin:0 0;">ACTIVITIES</div><svg class="abs" style="left:1262px;top:726.20px" width="9" height="7" viewBox="0 0 9 7"><path d="M1.3 1.6 L4.5 4.8 L7.7 1.6" fill="none" stroke="#000" stroke-width="1.8"/></svg><div class="btn" style="left:1360px;top:709.50px;background:#fff"><svg width="22" height="22" viewBox="0 0 22 22"><ellipse cx="11" cy="11" rx="7.1" ry="5.1" fill="none" stroke="#3a3d45" stroke-width="1.9"/><circle cx="11" cy="11" r="2.6" fill="#3a3d45"/></svg></div><div class="btn" style="left:1408px;top:709.50px;background:#f2f2f2"><svg width="22" height="22" viewBox="0 0 22 22"><g transform="rotate(-45 11 10.7)" fill="none" stroke="#555" stroke-width="1.5"><rect x="1.3" y="8.4" width="19.4" height="4.6" rx="2.3"/><path d="M16.4 8.4 V13"/></g></svg></div><div class="btn" style="left:1456px;top:709.50px;background:#f2f2f2"><svg width="22" height="22" viewBox="0 0 22 22"><g fill="none" stroke="#555" stroke-width="1.6"><path d="M7.8 4.9 H18.8 V17 H7.8 L3.5 10.8 Z"/><path d="M9.8 8.3 L15.2 13.8 M15.2 8.3 L9.8 13.8"/></g></svg></div><div class="row" style="top:771.20px;background:#fff"></div><div class="t" style="left:289.10px;top:790px;font-size:12.9px;font-weight:400;color:#151826;letter-spacing:0.173px;-webkit-text-stroke:0.2px #151826;">Auto-Assignment #31</div><div class="t" style="left:289.10px;top:808px;font-size:11.6px;font-weight:400;color:#6c6d75;letter-spacing:-0.262px;">M Eickhorn - NGSS Comp. Science - Per. 6 - 6</div><div class="vs" style="left:650.0px;top:780.90px"></div><div class="vs" style="left:901.0px;top:780.90px"></div><div class="vs" style="left:991.0px;top:780.90px"></div><div class="vs" style="left:1177.8px;top:780.90px"></div><div class="vs" style="left:1329.0px;top:780.90px"></div><div class="t" style="left:664.30px;top:789px;font-size:11.4px;font-weight:400;color:#6b6c74;letter-spacing:-0.033px;">Start Date</div><div class="t" style="left:663.30px;top:808px;font-size:12.9px;font-weight:400;color:#151826;letter-spacing:0.004px;-webkit-text-stroke:0.12px #151826;">Mar 03, 2025</div><div class="t" style="left:814.30px;top:789px;font-size:11.4px;font-weight:400;color:#6b6c74;letter-spacing:-0.033px;">Due Date</div><div class="t" style="left:813.30px;top:808px;font-size:12.9px;font-weight:400;color:#151826;letter-spacing:0.004px;-webkit-text-stroke:0.12px #151826;">Mar 17, 2025</div><div class="t" style="left:914.60px;top:789px;font-size:11.4px;font-weight:400;color:#6b6c74;letter-spacing:-0.033px;">Students:</div><div class="t" style="left:914.60px;top:808px;font-size:12.9px;font-weight:400;color:#151826;letter-spacing:0.004px;-webkit-text-stroke:0.12px #151826;">24/30</div><div class="t" style="left:1004.60px;top:789px;font-size:11.4px;font-weight:400;color:#6b6c74;letter-spacing:-0.033px;">Source</div><div class="t" style="left:1003.60px;top:808px;font-size:12.9px;font-weight:400;color:#151826;letter-spacing:0.004px;-webkit-text-stroke:0.12px #151826;">PAS</div><div class="t" style="left:1192.00px;top:799px;font-size:12.7px;font-weight:400;color:#3d3f47;letter-spacing:0.000px;transform:scaleX(0.9384);transform-origin:0 0;">ACTIVITIES</div><svg class="abs" style="left:1262px;top:801.80px" width="9" height="7" viewBox="0 0 9 7"><path d="M1.3 1.6 L4.5 4.8 L7.7 1.6" fill="none" stroke="#000" stroke-width="1.8"/></svg><div class="btn" style="left:1360px;top:785.10px;background:#fff"><svg width="22" height="22" viewBox="0 0 22 22"><ellipse cx="11" cy="11" rx="7.1" ry="5.1" fill="none" stroke="#3a3d45" stroke-width="1.9"/><circle cx="11" cy="11" r="2.6" fill="#3a3d45"/></svg></div><div class="btn" style="left:1408px;top:785.10px;background:#f2f2f2"><svg width="22" height="22" viewBox="0 0 22 22"><g transform="rotate(-45 11 10.7)" fill="none" stroke="#555" stroke-width="1.5"><rect x="1.3" y="8.4" width="19.4" height="4.6" rx="2.3"/><path d="M16.4 8.4 V13"/></g></svg></div><div class="btn" style="left:1456px;top:785.10px;background:#f2f2f2"><svg width="22" height="22" viewBox="0 0 22 22"><g fill="none" stroke="#555" stroke-width="1.6"><path d="M7.8 4.9 H18.8 V17 H7.8 L3.5 10.8 Z"/><path d="M9.8 8.3 L15.2 13.8 M15.2 8.3 L9.8 13.8"/></g></svg></div><div class="row" style="top:846.80px;background:#fff"></div><div class="abs" style="left:251px;top:820px;width:300px;height:80px;background:radial-gradient(ellipse 150px 30px at 100px 60px, rgba(0,0,0,0.07), rgba(0,0,0,0))"></div><svg class="abs" style="left:0;top:0;pointer-events:none" width="1547" height="857" viewBox="0 0 1547 857">
<g fill="#ff2116" stroke="none">
<path d="M1216.3 39.5 L1333 102" stroke="#ff2116" stroke-width="4.5"/>
<path d="M1354 113.8 L1337.1 90.7 L1325.1 113.1 Z"/>
<path d="M286.8 319.8 L163 410" stroke="#ff2116" stroke-width="4.8"/>
<path d="M144 423.7 L158 398.2 L172.3 418.5 Z"/>
</g></svg>
</body></html>
